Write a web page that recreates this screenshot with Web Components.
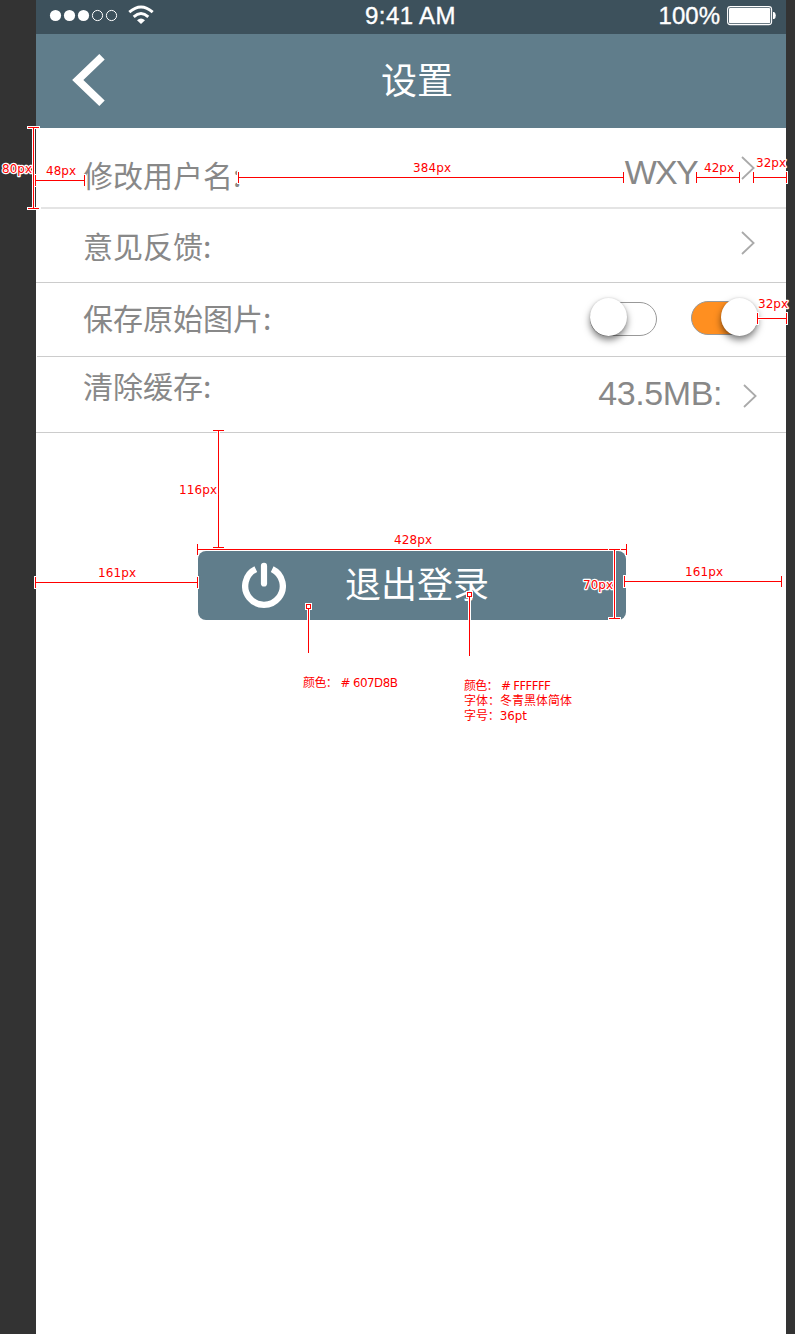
<!DOCTYPE html>
<html lang="zh-CN">
<head>
<meta charset="utf-8">
<title>设置</title>
<style>
html,body{margin:0;height:100%}
body{background:#333;overflow:hidden;font-family:"Liberation Sans","Noto Sans CJK SC",sans-serif}
</style>
</head>
<body>
<spec-board></spec-board>
<script>
const define = (name, html, setup) => customElements.define(name, class extends HTMLElement {
  constructor() {
    super();
    const t = document.createElement('template');
    t.innerHTML = html;
    this.attachShadow({mode: 'open'}).append(t.content.cloneNode(true));
  }
  connectedCallback() { if (setup) setup(this, this.shadowRoot); }
});

define('status-bar', `
<style>
:host{display:grid;grid-template-columns:1fr auto 1fr;align-items:center;height:34px;box-sizing:border-box;padding:0 9px 2px 14px;background:#3d515c;color:#fff;font-size:24px;line-height:32px;-webkit-text-stroke:.35px #fff}
svg{display:block;overflow:visible}
.right{display:flex;justify-content:flex-end;align-items:center;gap:7px}
.time{transform:translateX(-3px);letter-spacing:.4px}
</style>
<svg width="106" height="32" fill="#fff">
 <circle cx="5.5" cy="15.5" r="5.6"/><circle cx="19.5" cy="15.5" r="5.6"/><circle cx="33.5" cy="15.5" r="5.6"/>
 <g fill="none" stroke="#fff"><circle cx="47.5" cy="15.5" r="5.1"/><circle cx="61.5" cy="15.5" r="5.1"/>
 <path d="M79.3 12.1Q91 1.8 102.7 12.1M83.7 16.8Q91 10.4 98.3 16.8" stroke-width="2.9"/></g>
 <path d="M87 20.2Q91 16.6 95 20.2L91 24z"/>
</svg>
<span class="time">9:41 AM</span>
<span class="right"><span>100%</span><svg width="50" height="20"><rect x=".6" y=".6" width="44" height="18" rx="2.8" fill="none" stroke="#fff" stroke-width="1.1"/><rect x="2" y="2" width="41.2" height="15.2" rx="1.3" fill="#fff"/><path d="M46 6h1.2q1.6 1 1.6 3.5t-1.6 3.5H46z" fill="#fff"/></svg></span>`);

define('nav-header', `
<style>
:host{display:grid;grid-template-columns:1fr auto 1fr;align-items:center;height:94px;background:#607d8b;color:#fff;font:36px/94px "Noto Sans CJK SC",sans-serif}
svg{display:block;margin:-2px 0 0 36px}
.title{transform:translate(6px,-3px)}
</style>
<svg width="34" height="52" fill="none" stroke="#fff" stroke-width="7.8"><path d="M30 2.8L5.8 26L30 49.2"/></svg>
<span class="title"><slot></slot></span>`);

define('chevron-icon', `
<style>:host{display:block;width:14px;height:24px}svg{display:block}</style>
<svg width="14" height="24" fill="none" stroke="#aaa" stroke-width="1.8"><path d="M1 1L12.6 12L1 23"/></svg>`);

define('toggle-switch', `
<style>
:host{display:block;width:67px;height:34px;box-sizing:border-box;border:1px solid #999;border-radius:17px;background:#fff;position:relative}
:host([on]){background:#ff8f20}
i{position:absolute;left:-1px;top:-5px;width:37px;height:38px;border-radius:50%;background:#fff;box-shadow:0 4px 7px rgba(0,0,0,.5),0 0 2px rgba(0,0,0,.15)}
:host([on]) i{left:29px;top:-4px}
</style><i></i>`);

define('setting-row', `
<style>
:host{display:flex;align-items:flex-start;box-sizing:border-box;padding-left:47px;height:var(--h);color:#888;background:linear-gradient(var(--line,#ccc),var(--line,#ccc)) var(--inset,0) 100%/100% var(--bw,1px) no-repeat}
.label{font:30px/44px "Noto Sans CJK SC",sans-serif;margin-top:var(--label-top)}
.end{display:flex;margin-left:auto}
</style>
<span class="label"><slot></slot></span><span class="end"><slot name="end"></slot></span>`);

define('power-button', `
<style>
:host{display:flex;align-items:center;width:428px;height:69px;border-radius:8px;background:#607d8b;color:#fff;font:36px/68px "Noto Sans CJK SC",sans-serif}
svg{display:block;margin:0 59px 0 44px}
span{transform:translateY(-4px)}
</style>
<svg width="44" height="48" fill="none" stroke="#fff"><path d="M13.8 7.1A18.8 18.8 0 1 0 30.2 7.1" stroke-width="6.3"/><path d="M22 3.9V21.5" stroke-width="6.2" stroke-linecap="round"/></svg>
<span><slot></slot></span>`);

define('settings-screen', `
<style>
:host{display:flex;flex-direction:column;background:#fff}
.value{font:34px/40px "Liberation Sans",sans-serif;color:#888}
.name{margin:24px 44px 0 0;letter-spacing:-1.7px}
.cache{margin:16px 21px 0 0;letter-spacing:-.4px}
power-button{margin:118px 0 0 162px}
</style>
<status-bar></status-bar>
<nav-header>设置</nav-header>
<setting-row style="--h:81px;--label-top:24px;--line:#e4e4e4;--bw:2px;--inset:5px">修改用户名:<span slot="end" class="value name">WXY</span><chevron-icon slot="end" style="margin:28px 31px 0 0"></chevron-icon></setting-row>
<setting-row style="--h:74px;--label-top:14px">意见反馈:<chevron-icon slot="end" style="margin:22px 31px 0 0"></chevron-icon></setting-row>
<setting-row style="--h:74px;--label-top:12px;--inset:1px">保存原始图片:<toggle-switch slot="end" style="margin:19px 34px 0 0"></toggle-switch><toggle-switch slot="end" on style="margin:18px 28px 0 0"></toggle-switch></setting-row>
<setting-row style="--h:76px;--label-top:6px">清除缓存:<span slot="end" class="value cache">43.5MB:</span><chevron-icon slot="end" style="margin:27px 29px 0 0"></chevron-icon></setting-row>
<power-button>退出登录</power-button>`);

/* Redlines: [x1,y1,x2,y2] measured lines with end ticks, and their labels [text,x,baseline,width]. */
define('red-lines', `
<style>:host{position:absolute;inset:0;display:block}svg{display:block}
text{font:12px "DejaVu Sans","Noto Sans CJK SC",sans-serif;fill:#f00;stroke:#fff;stroke-width:2.5px;paint-order:stroke;stroke-linejoin:round}</style>
<svg width="795" height="1334"></svg>`, (host, root) => {
  const lines = [[35,180,84,180],[33,127,33,208],[238,177,623,177],[696,177,739,177],[753,177,786,177],
    [757,318,786,318],[218,430,218,547],[197,549,626,549],[35,582,197,582],[624,581,781,581],[614,549,614,618]];
  const labels = [['80px',2,173,30],['48px',46,175,30],['384px',413,172,38],['42px',704,172,30],['32px',756,167,30],['32px',758,308,30],
    ['116px',179,494,38],['428px',394,544,38],['161px',98,577,38],['161px',685,576,38],['70px',583,589,30],
    ['颜色： # 607D8B',303,687,95],['颜色： # FFFFFF',464,690,87],['字体：冬青黑体简体',464,705,108],['字号：36pt',464,720,63]];
  const rect = (x,y,w,h,c) => `<rect x="${x}" y="${y}" width="${w}" height="${h}" fill="${c}"/>`;
  let s = '';
  for (const [a,b,c,d] of lines) {
    const parts = a === c ? [[a,b,1,d-b+1],[a-5,b,11,1],[a-5,d,11,1]] : [[a,b,c-a+1,1],[a,b-5,1,11],[c,b-5,1,11]];
    for (const [x,y,w,h] of parts) s += rect(x-1,y-1,w+2,h+2,'#fff');
    for (const [x,y,w,h] of parts) s += rect(x,y,w,h,'#f00');
  }
  s += rect(35,175,1,11,'#f00');
  for (const [x,y,end] of [[308,606,652],[469,594,655]]) {
    s += rect(x-1,y,3,end-y+1,'#fff') + rect(x-3,y-3,7,7,'#fff') + rect(x,y+2,1,end-y-1,'#f00')
      + rect(x-2,y-2,5,5,'#f00') + rect(x-1,y-1,3,3,'#fff');
  }
  for (const [t,x,y,w] of labels) s += `<text x="${x}" y="${y}" textLength="${w}">${t}</text>`;
  root.querySelector('svg').innerHTML = s;
});

define('spec-board', `
<style>:host{display:grid;grid-template-columns:750px;padding:0 9px 0 36px;position:relative;box-sizing:border-box;width:795px;height:1334px;background:#333}</style>
<settings-screen></settings-screen><red-lines></red-lines>`);
</script>
</body>
</html>
